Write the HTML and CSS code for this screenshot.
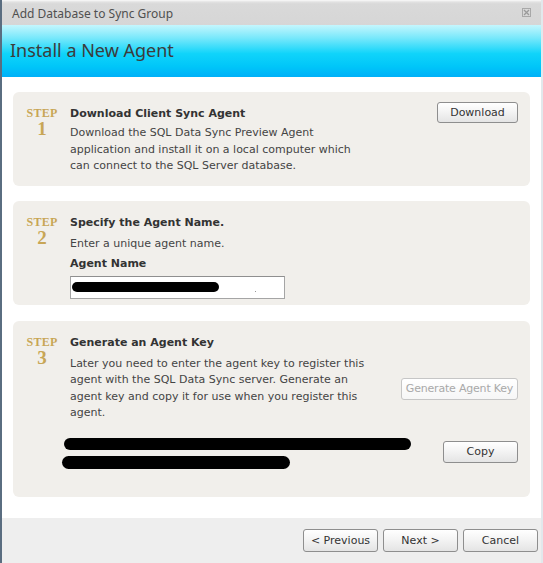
FILE: index.html
```html
<!DOCTYPE html>
<html>
<head>
<meta charset="utf-8">
<link rel="stylesheet" href="styles.css">
</head>
<body>
<div class="window">
  <div class="titlebar">
    <span class="title">Add Database to Sync Group</span>
    <svg class="close" width="9" height="9" viewBox="0 0 9 9"><rect x="0.5" y="0.5" width="8" height="8" fill="none" stroke="#a8a8a8"/><path d="M2 2 L7 7 M7 2 L2 7" stroke="#9a9a9a" stroke-width="1.3"/></svg>
  </div>
  <div class="banner"><h1>Install a New Agent</h1></div>
  <div class="content">
    <section class="card card-1">
      <div class="step"><span class="step-word">STEP</span><span class="step-num">1</span></div>
      <div class="main row-top">
        <div class="text">
          <h2>Download Client Sync Agent</h2>
          <p class="desc">Download the SQL Data Sync Preview Agent<br>application and install it on a local computer which<br>can connect to the SQL Server database.</p>
        </div>
        <button class="btn btn-download">Download</button>
      </div>
    </section>

    <section class="card card-2">
      <div class="step"><span class="step-word">STEP</span><span class="step-num">2</span></div>
      <div class="main">
        <h2>Specify the Agent Name.</h2>
        <p class="desc p-enter">Enter a unique agent name.</p>
        <label class="label">Agent Name</label>
        <div class="input"><span class="redact r-name"></span><span class="dot"></span></div>
      </div>
    </section>

    <section class="card card-3">
      <div class="step"><span class="step-word">STEP</span><span class="step-num">3</span></div>
      <div class="main">
        <h2>Generate an Agent Key</h2>
        <div class="row-center">
          <p class="desc desc-3">Later you need to enter the agent key to register this<br>agent with the SQL Data Sync server. Generate an<br>agent key and copy it for use when you register this<br>agent.</p>
          <button class="btn btn-disabled">Generate Agent Key</button>
        </div>
        <div class="key-row">
          <div class="key">
            <span class="redact r-key1"></span>
            <span class="redact r-key2"></span>
          </div>
          <button class="btn btn-copy">Copy</button>
        </div>
      </div>
    </section>
  </div>
  <div class="footer">
    <button class="btn btn-nav">&lt; Previous</button>
    <button class="btn btn-nav">Next &gt;</button>
    <button class="btn btn-nav">Cancel</button>
  </div>
</div>
</body>
</html>
```

FILE: styles.css
```css
html, body {
  margin: 0;
  padding: 0;
  width: 543px;
  height: 563px;
  overflow: hidden;
  background: #ffffff;
}

.window {
  box-sizing: border-box;
  width: 543px;
  height: 563px;
  border-left: 2px solid #5a6d80;
  border-right: 2px solid #e2e8ec;
  display: flex;
  flex-direction: column;
  font-family: "DejaVu Sans", Verdana, sans-serif;
  font-size: 11px;
  color: #444;
}

.titlebar {
  height: 25px;
  box-sizing: border-box;
  background: linear-gradient(#fafafa 0px, #e2e2e2 2px, #d9d9d9 4px, #d6d6d6 100%);
  display: flex;
  align-items: center;
  justify-content: space-between;
  padding: 2px 10px 0 10px;
}

.title {
  font-family: "Noto Sans", "Open Sans", sans-serif;
  font-size: 12px;
  color: #505050;
}

.close {
  display: block;
  margin-top: -2px;
}

.banner {
  height: 52px;
  box-sizing: border-box;
  background: linear-gradient(#c4f6fd 0%, #78e8fb 25%, #10d4fa 55%, #00c6f9 80%, #00b0f8 100%);
  display: flex;
  align-items: center;
  padding-left: 8px;
}

.banner h1 {
  margin: -3px 0 0 0;
  font-family: "Noto Sans", "Open Sans", sans-serif;
  font-weight: normal;
  font-size: 18px;
  color: #3c3c3c;
}

.content {
  flex: 1;
  padding: 15px 11px 0 11px;
  display: flex;
  flex-direction: column;
  gap: 15px;
}

.card {
  background: #f1efeb;
  border-radius: 6px;
  display: grid;
  grid-template-columns: 57px 1fr;
  padding: 14px 12px 11px 0;
  box-sizing: border-box;
}

.card-1 { height: 94px; }
.card-2 { height: 104px; padding-bottom: 5px; }
.card-3 { height: 176px; margin-top: 1px; }

.step {
  display: flex;
  flex-direction: column;
  align-items: center;
  font-family: "Liberation Serif", "Times New Roman", serif;
  font-weight: bold;
  color: #c8a656;
  padding-left: 1px;
}

.step-word {
  font-size: 12px;
  line-height: 12px;
  margin-top: 1px;
  letter-spacing: 0.2px;
}

.step-num {
  font-size: 19px;
  line-height: 18px;
  margin-top: 1px;
}

.main {
  display: flex;
  flex-direction: column;
}

.row-top {
  flex-direction: row;
  justify-content: space-between;
  align-items: flex-start;
}

h2 {
  margin: 0;
  font-size: 11px;
  line-height: 16px;
  font-weight: bold;
  color: #333;
}

.desc {
  margin: 3px 0 0 0;
  line-height: 16.5px;
  white-space: nowrap;
  color: #444;
}

.p-enter {
  margin-top: 5px;
  line-height: 16px;
}

.label {
  display: block;
  margin-top: 4px;
  font-weight: bold;
  line-height: 16px;
  color: #333;
}

.input {
  margin-top: 4px;
  width: 215px;
  height: 23px;
  box-sizing: border-box;
  background: #fff;
  border: 1px solid #a5a5a5;
  border-top-color: #8f8f8f;
  position: relative;
}

.redact {
  display: block;
  background: #000;
  border-radius: 7px;
}

.r-name {
  position: absolute;
  left: 1px;
  top: 5px;
  width: 147px;
  height: 10px;
  border-radius: 5px;
}

.dot {
  position: absolute;
  left: 184px;
  top: 14px;
  width: 1px;
  height: 1px;
  background: #999;
}

.row-center {
  display: flex;
  align-items: center;
  justify-content: space-between;
  margin-top: 5px;
}

.desc-3 {
  margin: 0;
  line-height: 16.4px;
}

.key-row {
  margin-top: 16px;
  display: flex;
  justify-content: space-between;
  align-items: flex-start;
}

.key {
  margin-left: -6px;
  display: flex;
  flex-direction: column;
  gap: 6px;
}

.r-key1 {
  width: 347px;
  height: 12px;
}

.r-key2 {
  width: 228px;
  height: 13px;
  margin-left: -2px;
}

.btn {
  font-family: "DejaVu Sans", Verdana, sans-serif;
  font-size: 11px;
  color: #333;
  background: linear-gradient(#ffffff 0%, #f4f4f4 45%, #e4e4e4 100%);
  border: 1px solid #8e8e8e;
  border-radius: 3px;
  padding: 0;
  height: 21px;
  box-sizing: border-box;
  cursor: default;
}

.btn-download {
  width: 81px;
  margin-top: -4px;
}

.btn-disabled {
  width: 117px;
  height: 22px;
  color: #a9a9a9;
  border-color: #c6c6c6;
  background: linear-gradient(#ffffff, #f6f6f6);
  white-space: nowrap;
  letter-spacing: -0.2px;
}

.btn-copy {
  width: 75px;
  height: 22px;
  margin-top: 3px;
}

.footer {
  height: 45px;
  box-sizing: border-box;
  background: #eeeeee;
  display: flex;
  justify-content: flex-end;
  align-items: flex-start;
  gap: 5px;
  padding: 11px 3px 0 0;
}

.btn-nav {
  width: 75px;
  height: 23px;
}
```
